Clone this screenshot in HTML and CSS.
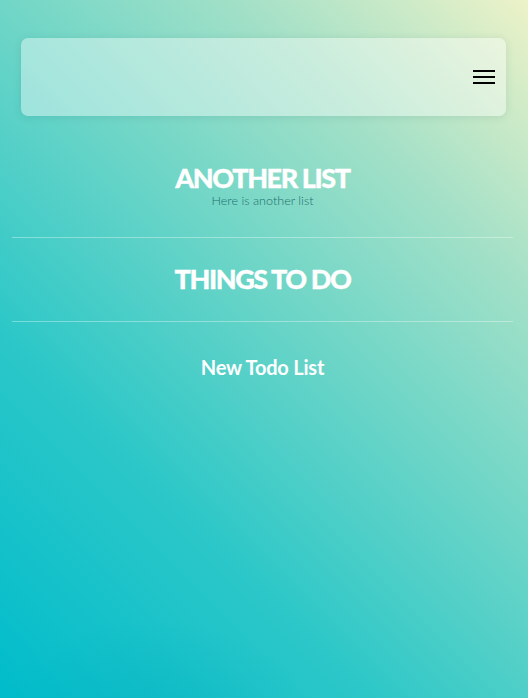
FILE: index.html
```html
<!DOCTYPE html>
<html>
<head>
<meta charset="utf-8">
<link rel="stylesheet" href="styles.css">
</head>
<body>
<div class="page">
  <header class="topbar">
    <button class="menu" aria-label="menu">
      <span></span><span></span><span></span>
    </button>
  </header>
  <section class="list">
    <h2 class="title">ANOTHER LIST</h2>
    <p class="desc">Here is another list</p>
  </section>
  <section class="list">
    <h2 class="title">THINGS TO DO</h2>
  </section>
  <div class="new">New Todo List</div>
</div>
</body>
</html>
```
FILE: styles.css
```css
html, body {
  margin: 0;
  height: 100%;
}
body {
  font-family: Lato, "Open Sans", sans-serif;
  background:
    radial-gradient(ellipse 45% 22% at 28% 104%, rgba(0,170,185,0.3), rgba(0,170,185,0) 70%),
    linear-gradient(45deg, #00bccb 0%, #2cc7c8 30%, #6cd5c7 55%, #a2e0c7 76%, #edf2c8 100%);
  overflow: hidden;
}
.page {
  padding: 38px 15px 0 12px;
}
.topbar {
  margin: 0 7px 0 9px;
  height: 78px;
  border-radius: 7px;
  background: rgba(255,255,255,0.4);
  box-shadow: 0 1px 8px rgba(0,80,80,0.12);
  display: flex;
  align-items: center;
  justify-content: flex-end;
  padding-right: 11px;
}
.menu {
  background: none;
  border: 0;
  padding: 0;
  width: 22px;
  height: 14px;
  display: flex;
  flex-direction: column;
  justify-content: space-between;
}
.menu span {
  display: block;
  height: 2px;
  background: #000;
}
.list {
  border-bottom: 1px solid rgba(255,255,255,0.35);
  padding: 27px 0 28px;
  text-align: center;
}
.list:first-of-type {
  padding: 48px 0 29px;
}
.title {
  margin: 0;
  font-size: 27px;
  line-height: 28px;
  font-weight: 900;
  letter-spacing: -1.4px;
  color: #fff;
  -webkit-text-stroke: 0.3px #fff;
}
.desc {
  margin: 2px 0 0;
  font-size: 12.6px;
  line-height: 14px;
  font-weight: 300;
  color: #22706f;
}
.new {
  text-align: center;
  color: #fff;
  font-weight: 700;
  font-size: 20px;
  letter-spacing: -0.2px;
  line-height: 24px;
  padding-top: 33px;
}
```
